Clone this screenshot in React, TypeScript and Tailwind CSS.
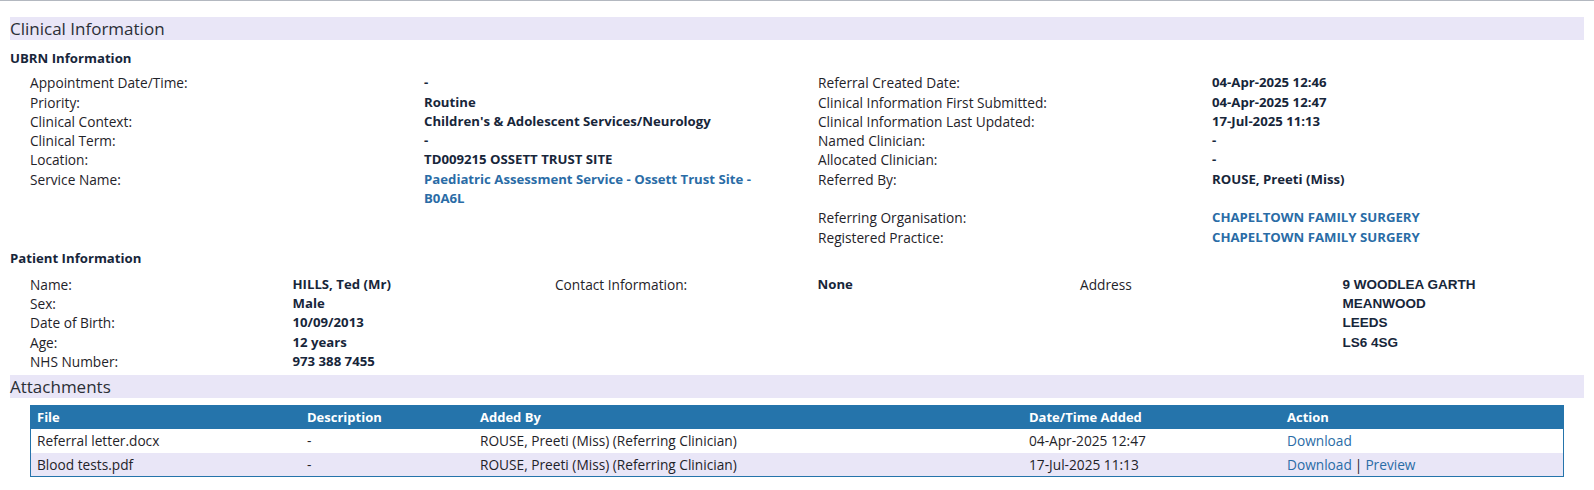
import React from 'react';

const font = { fontFamily: '"Open Sans", "Noto Sans", Arial, sans-serif' };

type Row = { label: string; value?: React.ReactNode; link?: boolean };

const ubrnLeft: Row[] = [
  { label: 'Appointment Date/Time:', value: '-' },
  { label: 'Priority:', value: 'Routine' },
  { label: 'Clinical Context:', value: "Children's & Adolescent Services/Neurology" },
  { label: 'Clinical Term:', value: '-' },
  { label: 'Location:', value: 'TD009215 OSSETT TRUST SITE' },
  {
    label: 'Service Name:',
    value: (
      <>
        Paediatric Assessment Service - Ossett Trust Site -<br />
        B0A6L
      </>
    ),
    link: true,
  },
];

const ubrnRight: Row[] = [
  { label: 'Referral Created Date:', value: '04-Apr-2025 12:46' },
  { label: 'Clinical Information First Submitted:', value: '04-Apr-2025 12:47' },
  { label: 'Clinical Information Last Updated:', value: '17-Jul-2025 11:13' },
  { label: 'Named Clinician:', value: '-' },
  { label: 'Allocated Clinician:', value: '-' },
  { label: 'Referred By:', value: 'ROUSE, Preeti (Miss)' },
  { label: '' },
  { label: 'Referring Organisation:', value: 'CHAPELTOWN FAMILY SURGERY', link: true },
  { label: 'Registered Practice:', value: 'CHAPELTOWN FAMILY SURGERY', link: true },
];

const patient: Row[] = [
  { label: 'Name:', value: 'HILLS, Ted (Mr)' },
  { label: 'Sex:', value: 'Male' },
  { label: 'Date of Birth:', value: '10/09/2013' },
  { label: 'Age:', value: '12 years' },
  { label: 'NHS Number:', value: '973 388 7455' },
];

const attachments = [
  { file: 'Referral letter.docx', desc: '-', by: 'ROUSE, Preeti (Miss) (Referring Clinician)', at: '04-Apr-2025 12:47', preview: false },
  { file: 'Blood tests.pdf', desc: '-', by: 'ROUSE, Preeti (Miss) (Referring Clinician)', at: '17-Jul-2025 11:13', preview: true },
];

const cols = 'grid grid-cols-[270px_173px_549px_258px_1fr]';

function SectionBar({ title }: { title: string }) {
  return (
    <div className="mx-[10px] h-[23px] bg-[#e9e6f7] text-[17px] leading-[23px] text-[#2b2f36]">
      {title}
    </div>
  );
}

function InfoRows({ rows, labelW, valueW }: { rows: Row[]; labelW: string; valueW: string }) {
  return (
    <div className="flex flex-col">
      {rows.map((r, i) => (
        <div key={i} className="flex min-h-[19.3px] leading-[19.3px]">
          <div className={`${labelW} shrink-0 text-[13.7px] text-[#1f2329]`}>{r.label}</div>
          <div className={`${valueW} text-[13.2px] font-bold ${r.link ? 'text-[#2a6ca6]' : 'text-[#17263a]'}`}>
            {r.value}
          </div>
        </div>
      ))}
    </div>
  );
}

export default function App() {
  return (
    <div className="w-[1594px] h-[490px] bg-white border-t border-[#b3b8c0] pt-[16px]" style={font}>
      <SectionBar title="Clinical Information" />

      {/* UBRN */}
      <div className="pl-[10px] pt-[9px] text-[13.2px] leading-[19.3px] font-bold text-[#17263a]">UBRN Information</div>
      <div className="flex pl-[30px] pt-[5px]">
        <div className="w-[788px] shrink-0">
          <InfoRows rows={ubrnLeft} labelW="w-[394px]" valueW="w-[380px]" />
        </div>
        <InfoRows rows={ubrnRight} labelW="w-[394px]" valueW="w-[360px]" />
      </div>

      {/* Patient */}
      <div className="pl-[10px] pt-[1.6px] text-[13.2px] leading-[19.3px] font-bold text-[#17263a]">
        Patient Information
      </div>
      <div className="flex pl-[30px] pt-[7px]">
        <div className="w-[525px] shrink-0">
          <InfoRows rows={patient} labelW="w-[262.5px]" valueW="w-[262.5px]" />
        </div>
        <div className="flex w-[525px] shrink-0 leading-[19.3px]">
          <div className="w-[262.5px] text-[13.7px] text-[#1f2329]">Contact Information:</div>
          <div className="text-[13.2px] font-bold text-[#17263a]">None</div>
        </div>
        <div className="flex leading-[19.3px]">
          <div className="w-[262.5px] text-[13.7px] text-[#1f2329]">Address</div>
          <div
            className="font-bold text-[#17263a] text-[13.5px]"
            style={{ fontFamily: '"Liberation Sans", Arial, sans-serif' }}
          >
            9 WOODLEA GARTH<br />
            MEANWOOD<br />
            LEEDS<br />
            LS6 4SG
          </div>
        </div>
      </div>

      {/* Attachments */}
      <div className="pt-[3.5px]">
        <SectionBar title="Attachments" />
      </div>
      <div className="ml-[30px] mt-[7px] w-[1534px] border border-[#2574ab]">
        <div className={`${cols} h-[23.5px] bg-[#2574ab] text-white text-[13px] font-bold leading-[23.5px]`}>
          <div className="pl-[6px]">File</div>
          <div className="pl-[6px]">Description</div>
          <div className="pl-[6px]">Added By</div>
          <div className="pl-[6px]">Date/Time Added</div>
          <div className="pl-[6px]">Action</div>
        </div>
        {attachments.map((a, i) => (
          <div
            key={a.file}
            className={`${cols} h-[23.5px] leading-[23.5px] text-[13.7px] text-[#1f2329] ${
              i % 2 === 1 ? 'bg-[#e9e6f7]' : 'bg-white'
            }`}
          >
            <div className="pl-[6px]">{a.file}</div>
            <div className="pl-[6px]">{a.desc}</div>
            <div className="pl-[6px]">{a.by}</div>
            <div className="pl-[6px]">{a.at}</div>
            <div className="pl-[6px]">
              <span className="text-[#2a6ca6]">Download</span>
              {a.preview && (
                <>
                  <span className="mx-[3px] text-[#1f2329]">|</span>
                  <span className="text-[#2a6ca6]">Preview</span>
                </>
              )}
            </div>
          </div>
        ))}
      </div>
    </div>
  );
}
